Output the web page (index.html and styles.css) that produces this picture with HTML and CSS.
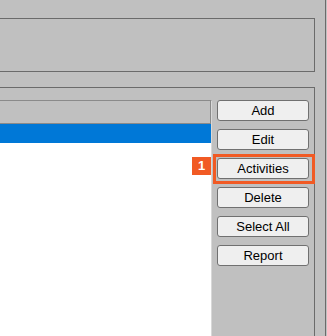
FILE: index.html
```html
<!DOCTYPE html>
<html lang="en">
<head>
  <meta charset="UTF-8">
  <title>Activities</title>
  <link rel="stylesheet" href="styles.css">
</head>
<body>
  <div class="window">
    <div class="group group-top"></div>

    <div class="group group-list">
      <div class="list">
        <div class="list-header"></div>
        <div class="list-row selected"></div>
      </div>

      <div class="buttons">
        <button class="btn">Add</button>
        <button class="btn">Edit</button>
        <div class="callout">
          <span class="badge">1</span>
          <button class="btn">Activities</button>
        </div>
        <button class="btn">Delete</button>
        <button class="btn">Select All</button>
        <button class="btn">Report</button>
      </div>
    </div>
  </div>
</body>
</html>
```

FILE: styles.css
```css
body {
  margin: 0;
  background: #c0c0c0;
  font-family: "Liberation Sans", Arial, sans-serif;
  font-size: 13px;
  overflow: hidden;
}

.window {
  display: flow-root;
  width: 325px;
  height: 336px;
  border-right: 1px solid #6b6b6b;
}

.group {
  width: 314px;
  border-top: 1px solid #6b6b6b;
  border-right: 1px solid #6b6b6b;
}

.group-top {
  margin-top: 18px;
  height: 52px;
  border-bottom: 1px solid #6b6b6b;
}

.group-list {
  margin-top: 15px;
  height: 236px;
  padding-top: 12px;
  display: flex;
  align-items: flex-start;
}

.list {
  width: 211px;
  height: 235px;
  background: #fff;
  border-top: 1px solid #8a8a8a;
  border-right: 1px solid #d8d8d8;
}

.list-header {
  height: 22px;
  background: #c0c0c0;
  border-bottom: 1px solid #8a8a8a;
  border-right: 1px solid #8a8a8a;
}

.list-row {
  height: 19px;
}

.selected {
  background: #0078d7;
}

.buttons {
  margin-left: 5px;
  display: flex;
  flex-direction: column;
  gap: 8px;
}

.btn {
  width: 92px;
  height: 21px;
  padding: 0;
  background: #efefef;
  border: 1px solid #707070;
  border-radius: 3px;
  font-family: "Liberation Sans", Arial, sans-serif;
  font-size: 13px;
  color: #000;
}

.callout {
  position: relative;
  display: flex;
}

/* highlight frame drawn over the button */
.callout::after {
  content: "";
  position: absolute;
  top: -4px;
  left: -4px;
  right: -6px;
  bottom: -5px;
  border: 3px solid #f15a24;
  pointer-events: none;
}

.badge {
  position: absolute;
  left: -25px;
  top: -1px;
  width: 19px;
  height: 18px;
  background: #f15a24;
  color: #fff;
  font-weight: bold;
  font-size: 13px;
  line-height: 18px;
  text-align: center;
}
```
